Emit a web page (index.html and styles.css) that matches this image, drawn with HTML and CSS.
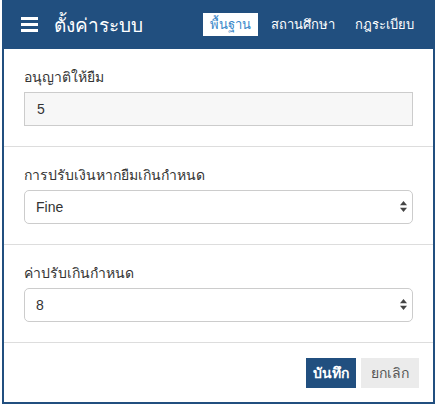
FILE: index.html
```html
<!DOCTYPE html>
<html lang="th">
<head>
<meta charset="utf-8">
<link rel="stylesheet" href="styles.css">
</head>
<body>
<div class="frame">
  <header class="topbar">
    <div class="brand">
      <svg class="menu-icon" width="17" height="15" viewBox="0 0 17 15"><rect x="0" y="0" width="17" height="3" fill="#fff"/><rect x="0" y="6" width="17" height="3" fill="#fff"/><rect x="0" y="12" width="17" height="3" fill="#fff"/></svg>
      <span class="title">ตั้งค่าระบบ</span>
    </div>
    <nav class="tabs">
      <span class="tab active">พื้นฐาน</span>
      <span class="tab">สถานศึกษา</span>
      <span class="tab">กฎระเบียบ</span>
    </nav>
  </header>
  <section class="group">
    <label class="lbl">อนุญาติให้ยืม</label>
    <div class="control readonly">5</div>
  </section>
  <section class="group">
    <label class="lbl">การปรับเงินหากยืมเกินกำหนด</label>
    <div class="select-wrap">
      <select class="control select"><option>Fine</option></select>
      <svg class="arrows" width="7" height="11" viewBox="0 0 7 11"><path d="M3.5 0 L7 4.2 H0 Z" fill="#444"/><path d="M3.5 11 L7 6.8 H0 Z" fill="#444"/></svg>
    </div>
  </section>
  <section class="group">
    <label class="lbl">ค่าปรับเกินกำหนด</label>
    <div class="select-wrap">
      <select class="control select"><option>8</option></select>
      <svg class="arrows" width="7" height="11" viewBox="0 0 7 11"><path d="M3.5 0 L7 4.2 H0 Z" fill="#444"/><path d="M3.5 11 L7 6.8 H0 Z" fill="#444"/></svg>
    </div>
  </section>
  <footer class="actions">
    <button class="btn save">บันทึก</button>
    <button class="btn cancel">ยกเลิก</button>
  </footer>
</div>
</body>
</html>
```
FILE: styles.css
```css
* { box-sizing: border-box; }
html, body { margin: 0; padding: 0; background: #fff; }
body {
  padding: 0 2px 2px 2px;
  font-family: "Liberation Sans", Arial, "Noto Sans", sans-serif;
  font-size: 14px;
  color: #333;
}
.frame {
  width: 433px;
  border: 2px solid #214f7f;
  border-top: 0;
  background: #fff;
}
.topbar {
  height: 49px;
  background: #214f7f;
  display: flex;
  align-items: center;
  justify-content: space-between;
  padding: 0 14px 0 19px;
  margin: 0 -2px;
}
.brand { display: flex; align-items: center; gap: 16px; }
.menu-icon { display: block; }
.title { color: #fff; font-size: 19px; font-weight: normal; }
.tabs { display: flex; align-items: center; gap: 6px; }
.tab {
  color: #fff;
  font-size: 13px;
  padding: 3px 7px;
  line-height: 17px;
  font-weight: normal;
}
.tab.active { background: #fff; color: #3a87c9; }
.group {
  padding: 18px 20px 20px;
  border-bottom: 1px solid #ddd;
}
.lbl { display: block; height: 20px; margin-bottom: 5px; font-size: 14px; line-height: 20px; color: #333; }
.control {
  display: block;
  width: 100%;
  height: 34px;
  border: 1px solid #ccc;
  padding: 6px 12px;
  font-family: inherit;
  font-size: 14px;
  line-height: 20px;
  color: #333;
}
.readonly { background: #f7f7f7; border-radius: 0; }
.select-wrap { position: relative; }
.select {
  -webkit-appearance: none;
  appearance: none;
  background: #fff;
  border-radius: 5px;
  padding: 6px 11px;
}
.arrows { position: absolute; right: 6px; top: 11px; }
.actions {
  display: flex;
  justify-content: flex-end;
  gap: 5px;
  padding: 15px 14px 14px;
}
.btn {
  height: 30px;
  border: 0;
  font-family: inherit;
  font-size: 14px;
  padding: 0 7px;
  border-radius: 0;
}
.save { background: #214f7f; color: #fff; font-weight: bold; }
.cancel { background: #ebebeb; color: #555; padding: 0 10px; }
```
